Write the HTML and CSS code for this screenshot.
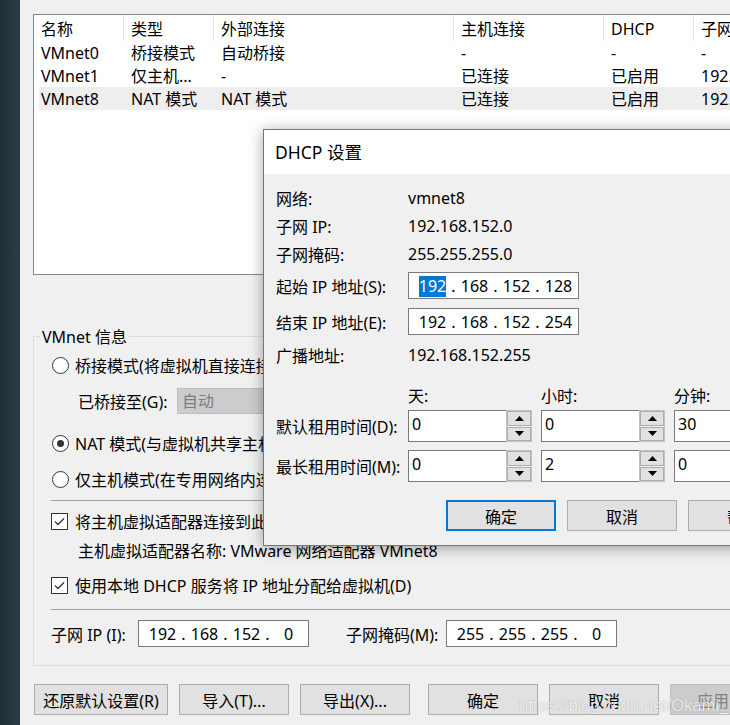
FILE: index.html
```html
<!DOCTYPE html>
<html lang="zh-CN">
<head>
<meta charset="utf-8">
<title>虚拟网络编辑器</title>
<link rel="stylesheet" href="styles.css">
</head>
<body>
<div class="desktop">
  <div class="strip"></div>
  <div class="win">
    <div class="listview">
      <div class="lv-head">
        <div class="hc">名称</div>
        <div class="hc">类型</div>
        <div class="hc">外部连接</div>
        <div class="hc">主机连接</div>
        <div class="hc">DHCP</div>
        <div class="hc">子网地址</div>
      </div>
      <div class="lv-row">
        <div>VMnet0</div><div>桥接模式</div><div>自动桥接</div><div>-</div><div>-</div><div>-</div>
      </div>
      <div class="lv-row">
        <div>VMnet1</div><div>仅主机...</div><div>-</div><div>已连接</div><div>已启用</div><div>192.168.80.0</div>
      </div>
      <div class="lv-row sel">
        <div>VMnet8</div><div>NAT 模式</div><div>NAT 模式</div><div>已连接</div><div>已启用</div><div>192.168.152.0</div>
      </div>
    </div>

    <div class="group">
      <div class="legend">VMnet 信息</div>
      <div class="opt opt-bridge"><span class="radio"></span><span>桥接模式(将虚拟机直接连接到外部网络)(B)</span></div>
      <div class="bridge-row">
        <span class="bridge-lbl">已桥接至(G):</span>
        <span class="combo">自动</span>
      </div>
      <div class="opt opt-nat"><span class="radio on"><span class="dot"></span></span><span>NAT 模式(与虚拟机共享主机的 IP 地址)(N)</span></div>
      <div class="opt opt-host"><span class="radio"></span><span>仅主机模式(在专用网络内连接虚拟机)(H)</span></div>
      <div class="sep sep1"></div>
      <div class="chk chk-adapter"><span class="box"><svg width="15" height="15" viewBox="0 0 15 15"><polyline points="3,7.5 6,10.5 12,4.5" fill="none" stroke="#333" stroke-width="1.3"/></svg></span><span>将主机虚拟适配器连接到此网络(V)</span></div>
      <div class="adapter-name">主机虚拟适配器名称: VMware 网络适配器 VMnet8</div>
      <div class="chk chk-dhcp"><span class="box"><svg width="15" height="15" viewBox="0 0 15 15"><polyline points="3,7.5 6,10.5 12,4.5" fill="none" stroke="#333" stroke-width="1.3"/></svg></span><span>使用本地 DHCP 服务将 IP 地址分配给虚拟机(D)</span></div>
      <div class="sep sep2"></div>
      <div class="subnet-row">
        <span class="sn-lbl">子网 IP (I):</span>
        <span class="ipbox"><span class="oct">192</span><span class="dot-s">.</span><span class="oct">168</span><span class="dot-s">.</span><span class="oct">152</span><span class="dot-s">.</span><span class="oct">0</span></span>
        <span class="sn-lbl2">子网掩码(M):</span>
        <span class="ipbox"><span class="oct">255</span><span class="dot-s">.</span><span class="oct">255</span><span class="dot-s">.</span><span class="oct">255</span><span class="dot-s">.</span><span class="oct">0</span></span>
      </div>
    </div>

    <div class="main-btns">
      <span class="btn btn-wide">还原默认设置(R)</span>
      <span class="btn">导入(T)...</span>
      <span class="btn">导出(X)...</span>
      <span class="btn btn-gap">确定</span>
      <span class="btn">取消</span>
      <span class="btn disabled">应用</span>
    </div>
  </div>
</div>

<div class="dialog">
  <div class="dlg-title">DHCP 设置</div>
  <div class="dlg-body">
    <div class="field"><span class="lbl">网络:</span><span>vmnet8</span></div>
    <div class="field"><span class="lbl">子网 IP:</span><span>192.168.152.0</span></div>
    <div class="field"><span class="lbl">子网掩码:</span><span>255.255.255.0</span></div>
    <div class="field field-ip1"><span class="lbl">起始 IP 地址(S):</span>
      <span class="ipbox"><span class="oct"><span class="hl">192</span></span><span class="dot-s">.</span><span class="oct">168</span><span class="dot-s">.</span><span class="oct">152</span><span class="dot-s">.</span><span class="oct">128</span></span>
    </div>
    <div class="field field-ip2"><span class="lbl">结束 IP 地址(E):</span>
      <span class="ipbox"><span class="oct">192</span><span class="dot-s">.</span><span class="oct">168</span><span class="dot-s">.</span><span class="oct">152</span><span class="dot-s">.</span><span class="oct">254</span></span>
    </div>
    <div class="field field-bc"><span class="lbl">广播地址:</span><span>192.168.152.255</span></div>
    <div class="days"><span>天:</span><span>小时:</span><span>分钟:</span></div>
    <div class="spinrow spinrow1">
      <span class="lbl">默认租用时间(D):</span>
      <span class="spin"><span class="spin-val">0</span><span class="spin-btns"><span class="sb"><svg width="9" height="5" viewBox="0 0 9 5"><polygon points="0,5 4.5,0 9,5" fill="#000"/></svg></span><span class="sb"><svg width="9" height="5" viewBox="0 0 9 5"><polygon points="0,0 9,0 4.5,5" fill="#000"/></svg></span></span></span>
      <span class="spin"><span class="spin-val">0</span><span class="spin-btns"><span class="sb"><svg width="9" height="5" viewBox="0 0 9 5"><polygon points="0,5 4.5,0 9,5" fill="#000"/></svg></span><span class="sb"><svg width="9" height="5" viewBox="0 0 9 5"><polygon points="0,0 9,0 4.5,5" fill="#000"/></svg></span></span></span>
      <span class="spin"><span class="spin-val">30</span><span class="spin-btns"><span class="sb"><svg width="9" height="5" viewBox="0 0 9 5"><polygon points="0,5 4.5,0 9,5" fill="#000"/></svg></span><span class="sb"><svg width="9" height="5" viewBox="0 0 9 5"><polygon points="0,0 9,0 4.5,5" fill="#000"/></svg></span></span></span>
    </div>
    <div class="spinrow spinrow2">
      <span class="lbl">最长租用时间(M):</span>
      <span class="spin"><span class="spin-val">0</span><span class="spin-btns"><span class="sb"><svg width="9" height="5" viewBox="0 0 9 5"><polygon points="0,5 4.5,0 9,5" fill="#000"/></svg></span><span class="sb"><svg width="9" height="5" viewBox="0 0 9 5"><polygon points="0,0 9,0 4.5,5" fill="#000"/></svg></span></span></span>
      <span class="spin"><span class="spin-val">2</span><span class="spin-btns"><span class="sb"><svg width="9" height="5" viewBox="0 0 9 5"><polygon points="0,5 4.5,0 9,5" fill="#000"/></svg></span><span class="sb"><svg width="9" height="5" viewBox="0 0 9 5"><polygon points="0,0 9,0 4.5,5" fill="#000"/></svg></span></span></span>
      <span class="spin"><span class="spin-val">0</span><span class="spin-btns"><span class="sb"><svg width="9" height="5" viewBox="0 0 9 5"><polygon points="0,5 4.5,0 9,5" fill="#000"/></svg></span><span class="sb"><svg width="9" height="5" viewBox="0 0 9 5"><polygon points="0,0 9,0 4.5,5" fill="#000"/></svg></span></span></span>
    </div>
    <div class="dlg-btns">
      <span class="btn default">确定</span>
      <span class="btn">取消</span>
      <span class="btn">帮助</span>
    </div>
  </div>
</div>

<div class="watermark">https://blog.csdn.net/Okami_</div>
</body>
</html>
```

FILE: styles.css
```css
* { box-sizing: border-box; }
html, body { margin: 0; padding: 0; }
body {
  width: 730px;
  height: 725px;
  overflow: hidden;
  position: relative;
  background: #f0f0f0;
  font-family: "Noto Sans", "Noto Sans CJK SC", sans-serif;
  font-size: 16px;
  color: #000;
}
.desktop { display: flex; height: 725px; }
.strip {
  width: 20px;
  flex: none;
  background: linear-gradient(to right, #1f2e36, #2b3d48);
}
.win {
  flex: none;
  width: 710px;
  height: 725px;
  overflow: hidden;
  background: #f0f0f0;
  padding: 14px 0 0 13px;
  display: flex;
  flex-direction: column;
  align-items: flex-start;
}

/* list view */
.listview {
  flex: none;
  width: 800px;
  height: 261px;
  background: #fff;
  border: 1px solid #828790;
}
.lv-head {
  display: grid;
  grid-template-columns: 90px 90px 240px 150px 90px 200px;
  height: 26px;
}
.hc {
  padding: 2px 0 0 7px;
  line-height: 24px;
  border-right: 1px solid #e5e5e5;
  white-space: nowrap;
}
.lv-row {
  display: grid;
  grid-template-columns: 85px 90px 240px 150px 90px 200px;
  margin-left: 5px;
  height: 23px;
  white-space: nowrap;
}
.lv-row > div {
  padding: 2px 0 0 7px;
  line-height: 21px;
  overflow: hidden;
}
.lv-row > div:first-child { padding-left: 2px; }
.lv-row.sel { background: #eeeeee; }

/* group box */
.group {
  flex: none;
  margin-top: 61px;
  width: 800px;
  height: 330px;
  border: 1px solid #dcdcdc;
  display: flex;
  flex-direction: column;
  align-items: flex-start;
}
.legend {
  margin: -10px 0 0 6px;
  padding: 0 2px;
  height: 20px;
  line-height: 20px;
  background: #f0f0f0;
}
.opt {
  display: flex;
  align-items: center;
  height: 24px;
  padding-left: 18px;
  gap: 6px;
  white-space: nowrap;
}
.opt-bridge { margin-top: 6px; }
.opt-nat { margin-top: 17px; }
.opt-host { margin-top: 12px; }
.radio {
  width: 17px;
  height: 17px;
  flex: none;
  border: 1px solid #333;
  border-radius: 50%;
  background: #fff;
  display: flex;
  align-items: center;
  justify-content: center;
}
.radio .dot {
  width: 7px;
  height: 7px;
  border-radius: 50%;
  background: #333;
}
.bridge-row {
  display: flex;
  align-items: center;
  height: 26px;
  margin-top: 11px;
  padding-left: 44px;
  white-space: nowrap;
}
.bridge-lbl { width: 99px; flex: none; }
.combo {
  width: 200px;
  height: 26px;
  background: #cccccc;
  border: 1px solid #bfbfbf;
  color: #7d7d7d;
  padding-left: 4px;
  line-height: 24px;
}
.sep {
  width: 760px;
  height: 1px;
  margin-left: 17px;
  background: #a0a0a0;
  flex: none;
}
.sep1 { margin-top: 9px; }
.sep2 { margin-top: 12px; }
.chk {
  display: flex;
  align-items: center;
  height: 24px;
  padding-left: 17px;
  gap: 7px;
  white-space: nowrap;
}
.chk-adapter { margin-top: 8px; }
.chk-dhcp { margin-top: 10px; }
.box {
  width: 17px;
  height: 17px;
  flex: none;
  border: 1px solid #333;
  background: #fff;
  display: flex;
  align-items: center;
  justify-content: center;
}
.adapter-name {
  height: 24px;
  line-height: 24px;
  margin-top: 6px;
  padding-left: 44px;
  white-space: nowrap;
}
.subnet-row {
  display: flex;
  align-items: center;
  height: 27px;
  margin-top: 10px;
  padding-left: 17px;
  white-space: nowrap;
}
.sn-lbl { width: 87px; flex: none; }
.sn-lbl2 { width: 100px; flex: none; margin-left: 37px; }

/* ip box */
.ipbox {
  display: flex;
  align-items: center;
  width: 171px;
  height: 27px;
  flex: none;
  border: 1px solid #7a7a7a;
  background: #fff;
  padding-left: 9px;
  white-space: nowrap;
}
.oct { width: 29px; text-align: center; flex: none; }
.dot-s { width: 13px; text-align: center; flex: none; }
.hl {
  display: inline-block;
  background: #0078d7;
  color: #fff;
  line-height: 21px;
}

/* buttons */
.btn {
  width: 110px;
  height: 31px;
  flex: none;
  border: 1px solid #adadad;
  background: #e1e1e1;
  display: flex;
  align-items: center;
  justify-content: center;
  white-space: nowrap;
}
.btn.default { border: 2px solid #0078d7; }
.btn.disabled {
  background: #cccccc;
  border-color: #bfbfbf;
  color: #838383;
  justify-content: flex-start;
  padding-left: 26px;
}
.main-btns {
  display: flex;
  gap: 11px;
  margin-top: 18px;
  margin-left: 1px;
}
.btn-wide { width: 134px; }
.btn-gap { margin-left: 7px; }

/* dialog */
.dialog {
  position: absolute;
  left: 263px;
  top: 129px;
  width: 560px;
  height: 417px;
  border: 1px solid #767676;
  background: #f0f0f0;
  box-shadow: 0 2px 14px rgba(0, 0, 0, 0.35);
  display: flex;
  flex-direction: column;
}
.dlg-title {
  height: 44px;
  flex: none;
  background: #fff;
  font-size: 17.5px;
  line-height: 44px;
  padding-left: 11px;
}
.dlg-body {
  padding: 10px 0 0 12px;
  display: flex;
  flex-direction: column;
  align-items: flex-start;
}
.field {
  display: flex;
  align-items: center;
  height: 28px;
  white-space: nowrap;
}
.lbl { width: 132px; flex: none; white-space: nowrap; }
.field-ip1 { height: 27px; margin-top: 4px; }
.field-ip2 { height: 27px; margin-top: 9px; }
.field-bc { margin-top: 6px; }
.days {
  display: flex;
  height: 20px;
  line-height: 20px;
  margin-top: 17px;
  padding-left: 132px;
}
.days span { width: 133px; flex: none; }
.spinrow {
  display: flex;
  align-items: center;
  height: 32px;
  gap: 9px;
  white-space: nowrap;
}
.spinrow .lbl { margin-right: -9px; }
.spinrow1 { margin-top: 4px; }
.spinrow2 { margin-top: 8px; }
.spin {
  width: 124px;
  height: 32px;
  flex: none;
  display: flex;
}
.spin-val {
  width: 98px;
  height: 32px;
  background: #fff;
  border: 1px solid #7a7a7a;
  border-right: none;
  padding: 1px 0 0 3px;
  line-height: 24px;
}
.spin-btns {
  width: 26px;
  height: 32px;
  border: 1px solid #c2c2c2;
  background: #f0f0f0;
  display: flex;
  flex-direction: column;
  gap: 1px;
}
.sb {
  flex: 1;
  background: #e1e1e1;
  border: 1px solid #adadad;
  display: flex;
  align-items: center;
  justify-content: center;
}
.dlg-btns {
  display: flex;
  gap: 11px;
  margin-top: 18px;
  padding-left: 170px;
}

.watermark {
  position: absolute;
  left: 519px;
  top: 695px;
  font-family: "Liberation Sans", Arial, sans-serif;
  font-size: 16.5px;
  line-height: 20px;
  color: rgba(255, 255, 255, 0.85);
  text-shadow: 0 0 1px rgba(0, 0, 0, 0.35);
  white-space: nowrap;
}
```
